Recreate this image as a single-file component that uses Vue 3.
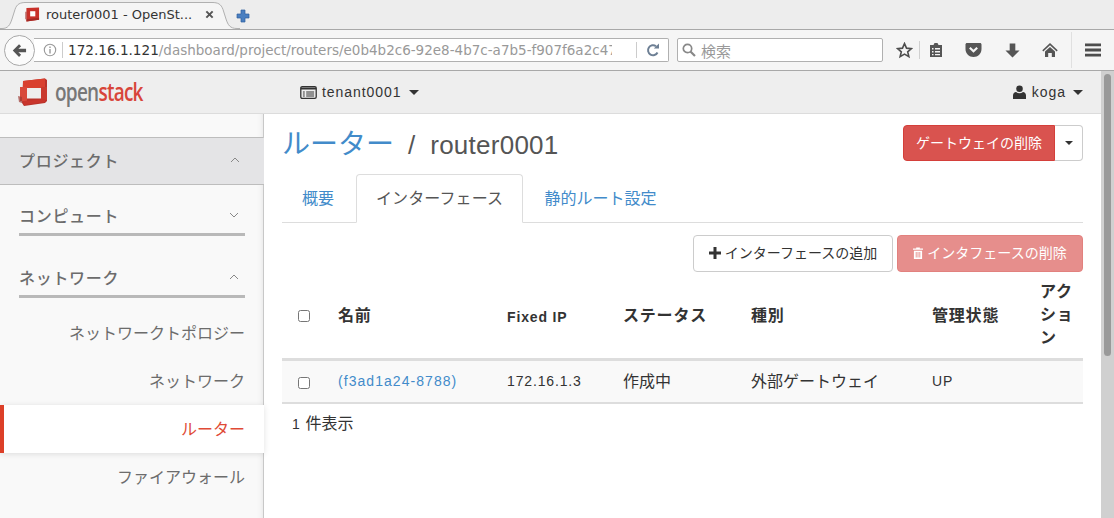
<template>
  <div class="page">
    <header class="tabbar">
      <svg class="tab-shape" viewBox="0 0 240 29"><path d="M0 28.500H2C8 28.500 10 25 12 19L15 9.500C16.800 4 20 2.500 26 2.500H212C218 2.500 221 4 223 9.500L226 19C228 25 230 28.500 237 28.500H240V29H0Z" fill="#f5f5f5"/><path d="M0 28.500H2C8 28.500 10 25 12 19L15 9.500C16.800 4 20 2.500 26 2.500H212C218 2.500 221 4 223 9.500L226 19C228 25 230 28.500 237 28.500H240" fill="none" stroke="#b0b0b0"/></svg>
      <div class="tab">
        <svg class="favicon" viewBox="0 0 16 16"><path d="M1.500 1L15 .5V13.500L1.500 15.500z" fill="#c8312a"/><path d="M0 5h2v8H0z" fill="#a8453f" opacity=".6"/><path d="M5.500 4.500h5.500v5.500H5.500z" fill="#fff"/><path d="M1.500 13l13.500-1.500v2L1.500 15.500z" fill="#a52a25"/></svg>
        <span class="tab-title">router0001 - OpenSt...</span>
        <svg class="tab-close" viewBox="0 0 10 10"><path d="M1.500 1.500l7 7M8.500 1.500l-7 7" stroke="#555" stroke-width="2.200"/></svg>
      </div>
      <svg class="newtab" viewBox="0 0 14 14"><path d="M5 1h4v4h4v4H9v4H5V9H1V5h4z" fill="#4a7fc0" stroke="#2f5f9f" stroke-width=".7"/></svg>
    </header>

    <div class="toolbar">
      <div class="back">
        <svg viewBox="0 0 16 16"><path d="M7.500 1.200L.8 8l6.700 6.800 2.200-2.200-2.900-2.800H15V6.200H6.800l2.900-2.800z" fill="#555"/></svg>
      </div>
      <div class="urlbar">
        <svg class="info" viewBox="0 0 14 14"><circle cx="7" cy="7" r="5.700" fill="none" stroke="#999" stroke-width="1.100"/><path d="M6.300 3.500h1.400v1.400H6.300zM6.300 6h1.400v4.500H6.300z" fill="#999"/></svg>
        <span class="sep"></span>
        <span class="url"><span class="url-host">172.16.1.121</span>/dashboard/project/routers/e0b4b2c6-92e8-4b7c-a7b5-f907f6a2c47</span>
        <span class="sep reload-sep"></span>
        <svg class="reload" viewBox="0 0 14 14"><path d="M11.500 9.500A5 5 0 1 1 10 3.200" fill="none" stroke="#6d7f94" stroke-width="2"/><path d="M7.800 5.500H13V.500z" fill="#6d7f94"/></svg>
      </div>
      <div class="search">
        <svg viewBox="0 0 14 14"><circle cx="5.500" cy="5.500" r="4.200" fill="none" stroke="#888" stroke-width="1.700"/><path d="M8.500 8.500l4.500 4.500" stroke="#888" stroke-width="2.200"/></svg>
        <span>検索</span>
      </div>
      <div class="tools">
        <svg class="t-star" viewBox="0 0 16 16"><path d="M8 1.500l1.900 4.300 4.600.4-3.500 3 1.100 4.600L8 11.400l-4.100 2.400L5 9.200l-3.500-3 4.600-.4z" fill="none" stroke="#4d4d4d" stroke-width="1.500"/></svg>
        <span class="tool-sep"></span>
        <svg class="t-clip" viewBox="0 0 16 16"><path d="M2 3h3.500l1-2h3l1 2H14v12H2z" fill="#555"/><path d="M4 6h1.500v1.500H4zM7 6h5v1.500H7zM4 9h1.500v1.500H4zM7 9h5v1.500H7zM4 12h1.500v1.200H4zM7 12h5v1.200H7z" fill="#f5f5f5"/></svg>
        <svg class="t-pocket" viewBox="0 0 16 14"><path d="M0 1.500C0 .7.600 0 1.500 0h13c.9 0 1.500.7 1.500 1.500V6c0 4.500-3.500 8-8 8s-8-3.500-8-8z" fill="#555"/><path d="M4.300 4.800L8 8.300l3.700-3.500" fill="none" stroke="#f5f5f5" stroke-width="2.200"/></svg>
        <svg class="t-down" viewBox="0 0 16 16"><path d="M5 .5h6V8h4.500L8 15.500.5 8H5z" fill="#555"/></svg>
        <svg class="t-home" viewBox="0 0 16 16"><path d="M8 1L.3 8.300l1 1.100L8 3.200l6.700 6.200 1-1.100z" fill="#555"/><path d="M3 9.500L8 4.900l5 4.600V15H9.800v-4H6.200v4H3z" fill="#555"/></svg>
        <span class="tool-sep tall"></span>
        <svg class="t-menu" viewBox="0 0 16 14"><path d="M0 .5h16v2.800H0zM0 5.600h16v2.800H0zM0 10.700h16v2.800H0z" fill="#4d4d4d"/></svg>
      </div>
    </div>

    <div class="viewport">
      <div class="app">
        <nav class="navbar">
          <div class="brand">
            <svg class="logo" viewBox="0 0 30 28">
              <path d="M5 3L27 .5 29 2v21l-2 2-21 3-2-3z" fill="#b9332b"/>
              <path d="M5 3L27 .5V10L5 10z" fill="#d9402f"/>
              <path d="M2 9h7v14H2z" fill="#d8493b"/>
              <path d="M0 18l4 1v6l-3-1z" fill="#9b3a34" opacity=".7"/>
              <path d="M23 9h6v13h-6z" fill="#c93a2e"/>
              <path d="M9 10h14v10.500H9z" fill="#eee"/>
              <path d="M5 23l22-2v3L6 27z" fill="#c9352c"/>
            </svg>
            <span class="wordmark"><span class="open">open</span><span class="stack">stack</span></span>
          </div>
          <div class="tenant">
            <svg viewBox="0 0 18 14"><rect x=".7" y=".7" width="16.600" height="12.600" rx="1.500" fill="none" stroke="#333" stroke-width="1.400"/><path d="M.7 1.500h16.600v2.300H.7zM3 5.800h2v1.200H3zM6.500 5.800H15v1.200H6.500zM3 8h2v1.200H3zM6.500 8H15v1.200H6.500zM3 10.200h2v1.200H3zM6.500 10.200H15v1.200H6.500z" fill="#333"/></svg>
            <span>tenant0001</span>
            <i class="caret"></i>
          </div>
          <div class="user">
            <svg viewBox="0 0 13 14"><circle cx="6.500" cy="3.800" r="3.300" fill="#333"/><path d="M0 14v-3.500C0 8.500 1.500 7 3 7c1 .8 2.200 1.200 3.500 1.200S9 7.800 10 7c1.500 0 3 1.500 3 3.500V14z" fill="#333"/></svg>
            <span>koga</span>
            <i class="caret"></i>
          </div>
        </nav>

        <div class="body">
          <aside class="sidebar">
            <div class="side-top"></div>
            <div class="side-project">
              <span>プロジェクト</span>
              <svg class="chev" viewBox="0 0 10 6"><path d="M1 5l4-4 4 4" fill="none" stroke="#888" stroke-width="1"/></svg>
            </div>
            <div class="side-group first">
              <span>コンピュート</span>
              <svg class="chev" viewBox="0 0 10 6"><path d="M1 1l4 4 4-4" fill="none" stroke="#888" stroke-width="1"/></svg>
            </div>
            <div class="side-group">
              <span>ネットワーク</span>
              <svg class="chev" viewBox="0 0 10 6"><path d="M1 5l4-4 4 4" fill="none" stroke="#888" stroke-width="1"/></svg>
            </div>
            <ul class="side-items">
              <li v-for="item in sideItems" :key="item" :class="{ active: item === 'ルーター' }">{{ item }}</li>
            </ul>
          </aside>

          <main class="content">
            <div class="title-row">
              <h1><a>ルーター</a><span class="slash">/</span><span class="rname">router0001</span></h1>
              <div class="split">
                <button class="danger">ゲートウェイの削除</button>
                <button class="split-caret"><i class="caret"></i></button>
              </div>
            </div>

            <div class="tabs">
              <a class="nav-tab">概要</a>
              <a class="nav-tab active">インターフェース</a>
              <a class="nav-tab">静的ルート設定</a>
            </div>

            <div class="actions">
              <button class="btn-default">
                <svg viewBox="0 0 12 12"><path d="M4.500 0h3v4.500H12v3H7.500V12h-3V7.500H0v-3h4.500z" fill="#333"/></svg>
                インターフェースの追加
              </button>
              <button class="btn-disabled">
                <svg viewBox="0 0 11 13"><path d="M3.500 1.500V.5h4v1H11v1.300H0V1.500zM1 4h9v9H1zM3 5.500v6h1v-6zM5 5.500v6h1v-6zM7 5.500v6h1v-6z" fill="#fff" fill-rule="evenodd"/></svg>
                インタフェースの削除
              </button>
            </div>

            <table>
              <colgroup>
                <col v-for="w in colWidths" :key="w" :style="{ width: w + 'px' }" />
              </colgroup>
              <thead>
                <tr>
                  <th class="check"><span class="cb"></span></th>
                  <th v-for="h in headers" :key="h" :class="{ ja: h !== 'Fixed IP' }">{{ h }}</th>
                </tr>
              </thead>
              <tbody>
                <tr>
                  <td class="check"><span class="cb"></span></td>
                  <td class="link"><a>(f3ad1a24-8788)</a></td>
                  <td>172.16.1.3</td>
                  <td class="ja">作成中</td>
                  <td class="ja">外部ゲートウェイ</td>
                  <td>UP</td>
                  <td></td>
                </tr>
              </tbody>
            </table>
            <p class="count">1 <span class="ja">件表示</span></p>
          </main>
        </div>
      </div>
      <div class="scrollbar"><div class="thumb"></div></div>
    </div>
  </div>
</template>

<script setup>
const sideItems = ['ネットワークトポロジー', 'ネットワーク', 'ルーター', 'ファイアウォール']
const headers = ['名前', 'Fixed IP', 'ステータス', '種別', '管理状態', 'アクション']
const colWidths = [46, 169, 116, 128, 181, 108, 53]
</script>

<style>
html, body { margin: 0; height: 100%; overflow: hidden; }
</style>

<style scoped>
.page {
  width: 1114px;
  height: 518px;
  display: flex;
  flex-direction: column;
  overflow: hidden;
  font-family: "Liberation Sans", "Noto Sans CJK JP", sans-serif;
  color: #333;
}
.tabbar {
  height: 29px;
  background: #ededed;
  border-bottom: 1px solid #a8a8a8;
  display: flex;
  align-items: flex-end;
  padding-left: 25px;
  flex: none;
  position: relative;
}
.tab-shape { position: absolute; left: 0; top: 0; width: 240px; height: 29px; }
.tab {
  width: 193px;
  height: 28px;
  position: relative;
  display: flex;
  align-items: center;
  padding-bottom: 1px;
  box-sizing: border-box;
}
.favicon { width: 15px; height: 15px; flex: none; }
.tab-title {
  margin-left: 6px;
  font-family: "DejaVu Sans", sans-serif;
  font-size: 13px;
  color: #333;
  white-space: nowrap;
  width: 159px;
}
.tab-close { width: 9px; height: 9px; flex: none; }
.newtab { width: 14px; height: 14px; margin: 0 0 6px 18px; position: relative; }

.toolbar {
  height: 40px;
  flex: none;
  background: #f5f5f5;
  border-bottom: 1px solid #a8a8a8;
  display: flex;
  align-items: center;
  position: relative;
}
.back {
  width: 31px;
  height: 31px;
  box-sizing: border-box;
  border: 1px solid #a8a8a8;
  border-radius: 50%;
  background: #fbfbfb;
  margin-left: 4px;
  display: flex;
  align-items: center;
  justify-content: center;
  z-index: 1;
  flex: none;
}
.back svg { width: 15px; height: 15px; }
.urlbar {
  width: 635px;
  height: 24px;
  box-sizing: border-box;
  margin-left: -1px;
  background: #fff;
  border: 1px solid #b0b0b0;
  border-left: none;
  border-radius: 0 2px 2px 0;
  display: flex;
  align-items: center;
  padding-left: 9px;
  flex: none;
}
.info { width: 14px; height: 14px; flex: none; }
.sep { width: 1px; height: 16px; background: #ccc; margin: 0 5px; flex: none; }
.url {
  font-family: "DejaVu Sans", sans-serif;
  font-size: 13.500px;
  color: #999;
  white-space: nowrap;
  overflow: hidden;
  width: 544px;
  flex: none;
}
.url-host { color: #333; font-size: 13.600px; }
.reload-sep { margin: 0 0 0 24px; }
.reload { width: 14px; height: 14px; margin-left: 9px; flex: none; }
.search {
  width: 206px;
  height: 24px;
  box-sizing: border-box;
  margin-left: 8px;
  background: #fff;
  border: 1px solid #b0b0b0;
  border-radius: 2px;
  display: flex;
  align-items: center;
  padding-left: 4px;
  flex: none;
  color: #999;
  font-size: 15px;
}
.search svg { width: 14px; height: 14px; margin-right: 5px; }
.tools { position: relative; flex: 1; height: 100%; display: flex; align-items: center; }
.tools svg { flex: none; }
.t-star { width: 17px; height: 17px; margin-left: 13px; }
.tool-sep { width: 1px; height: 18px; background: #d0d0d0; margin-left: 6px; flex: none; }
.tool-sep.tall { height: 36px; margin-left: 13px; background: #e0e0e0; }
.t-clip { width: 16px; height: 16px; margin-left: 8px; }
.t-pocket { width: 17px; height: 14px; margin-left: 21px; }
.t-down { width: 15px; height: 15px; margin-left: 23px; }
.t-home { width: 16px; height: 16px; margin-left: 22px; }
.t-menu { width: 16px; height: 14px; margin-left: 13px; }

.viewport { flex: 1; display: flex; min-height: 0; }
.app { flex: 1; min-width: 0; display: flex; flex-direction: column; }
.navbar {
  height: 43px;
  flex: none;
  background: #eee;
  box-sizing: border-box;
  border-bottom: 1px solid #dcdcdc;
  display: flex;
  align-items: center;
  font-size: 14px;
  letter-spacing: .95px;
  padding-left: 18px;
}
.brand { width: 282px; display: flex; align-items: center; flex: none; }
.logo { width: 30px; height: 28px; flex: none; }
.wordmark {
  margin-left: 7px;
  margin-top: -3px;
  font-family: "Open Sans", sans-serif;
  font-weight: 600;
  font-size: 25px;
  letter-spacing: -1px;
  display: inline-block;
  transform: scaleX(.76);
  transform-origin: left center;
  white-space: nowrap;
}
.open { color: #777; }
.stack { color: #d8453a; }
.tenant { display: flex; align-items: center; flex: 1; }
.tenant svg { width: 17px; height: 13px; margin-right: 5px; }
.user { display: flex; align-items: center; margin-right: 18px; }
.user svg { width: 13px; height: 14px; margin-right: 6px; }
.caret {
  display: inline-block;
  border-top: 5px solid #333;
  border-left: 5px solid transparent;
  border-right: 5px solid transparent;
  margin-left: 7px;
}
.body { flex: 1; display: flex; min-height: 0; background: #fff; }
.sidebar {
  width: 264px;
  flex: none;
  box-sizing: border-box;
  background: #f9f9f9;
  box-shadow: inset -6px 0 6px -6px rgba(0,0,0,.1);
  border-right: 1px solid #c8c8c8;
  font-size: 16px;
  color: #6c6c6c;
  position: relative;
}
.side-top { height: 23px; border-bottom: 1px solid #bdbdbd; }
.side-project {
  height: 47px;
  box-sizing: border-box;
  border-bottom: 1px solid #bdbdbd;
  background: #e4e4e6;
  margin-right: -1px;
  display: flex;
  align-items: center;
  justify-content: space-between;
  padding: 0 24px 2px 19px;
  font-weight: 500;
  letter-spacing: .7px;
}
.side-group {
  margin: 26px 18px 0 19px;
  height: 29px;
  padding-bottom: 4px;
  border-bottom: 3px solid #b9b9b9;
  display: flex;
  align-items: center;
  justify-content: space-between;
  padding-right: 6px;
  font-weight: 500;
  letter-spacing: .7px;
}
.side-group.first { margin-top: 15px; }
.chev { width: 10px; height: 6px; }
.side-items {
  list-style: none;
  margin: 11px 0 0;
  padding: 0;
}
.side-items li {
  height: 48px;
  line-height: 50px;
  box-sizing: border-box;
  text-align: right;
  padding-right: 18px;
}
.side-items li.active {
  position: relative;
  margin-right: -1px;
  padding-right: 19px;
  background: #fff;
  color: #e04a36;
  border-left: 4px solid #dc3f28;
  box-shadow: 0 1px 6px rgba(0,0,0,.12);
}

.content { flex: 1; min-width: 0; padding: 0 18px; font-size: 14px; letter-spacing: .85px; }
.title-row {
  height: 60px;
  display: flex;
  justify-content: space-between;
  align-items: flex-start;
}
h1 {
  margin: 13px 0 0;
  font-size: 26px;
  font-weight: 400;
  line-height: 36px;
  letter-spacing: 0;
  white-space: nowrap;
  color: #555;
}
h1 a { font-size: 28px; color: #428bca; }
.slash { margin: 0 15px 0 14px; }
.rname { letter-spacing: .25px; }
button {
  font: inherit;
  box-sizing: border-box;
  cursor: pointer;
}
.split { display: flex; margin-top: 11px; }
.danger {
  width: 152px;
  height: 36px;
  background: #d9534f;
  border: 1px solid #d43f3a;
  color: #fff;
  border-radius: 4px 0 0 4px;
  padding: 0 0 3px;
  letter-spacing: 0;
}
.split-caret {
  width: 28px;
  height: 36px;
  background: #fff;
  border: 1px solid #ccc;
  border-left: none;
  border-radius: 0 4px 4px 0;
  padding: 0;
}
.split-caret .caret { border-top-width: 4px; border-left-width: 4px; border-right-width: 4px; display: block; margin: 0 auto; width: 0; }
.tabs {
  display: flex;
  height: 49px;
  box-sizing: border-box;
  border-bottom: 1px solid #ddd;
}
.nav-tab {
  padding: 0 20px;
  height: 48px;
  line-height: 50px;
  color: #428bca;
  letter-spacing: 0;
  font-size: 16px;
}
.nav-tab.active {
  height: 49px;
  box-sizing: border-box;
  background: #fff;
  border: 1px solid #ddd;
  border-bottom-color: #fff;
  border-radius: 4px 4px 0 0;
  color: #555;
  margin: 0 1.500px 0 2px;
  line-height: 48px;
  padding: 0 19px;
  letter-spacing: .1px;
}
.actions {
  display: flex;
  justify-content: flex-end;
  gap: 4px;
  margin-top: 12px;
}
.actions button {
  height: 37px;
  border-radius: 4px;
  padding: 0 0 3px;
  display: flex;
  align-items: center;
  justify-content: center;
  letter-spacing: 0;
  white-space: nowrap;
}
.actions svg { margin-right: 4px; margin-top: 2px; }
.btn-default {
  width: 200px;
  background: #fff;
  border: 1px solid #ccc;
  color: #333;
}
.btn-default svg { width: 12px; height: 12px; }
.btn-disabled {
  width: 186px;
  background: #d9534f;
  border: 1px solid #d43f3a;
  color: #fff;
  opacity: .65;
}
.btn-disabled svg { width: 10px; height: 12px; }
table {
  width: 801px;
  table-layout: fixed;
  border-collapse: separate;
  border-spacing: 0;
}
th {
  text-align: left;
  vertical-align: middle;
  padding: 3px 10px 0;
  height: 89px;
  box-sizing: border-box;
  font-weight: 700;
  border-bottom: 3px solid #ddd;
}
th:last-child { padding-right: 6px; padding-top: 1px; }
td {
  padding: 0 10px 2px;
  height: 43px;
  box-sizing: border-box;
  background: #f9f9f9;
  border-bottom: 2px solid #ddd;
}
th.ja { font-size: 16px; line-height: 22.800px; letter-spacing: .8px; }
.ja { font-size: 16px; letter-spacing: 0; }
td.ja { padding-bottom: 4px; }
td.link { letter-spacing: 1.050px; }
td a { color: #428bca; }
.check { padding: 0 0 0 16px; }
th.check { padding-top: 2px; }
.cb {
  display: block;
  width: 12px;
  height: 12px;
  box-sizing: border-box;
  background: #fff;
  border: 1px solid #767676;
  border-radius: 2.500px;
}
td.check .cb { margin-top: 2px; }
.count { margin: 10px 0 0 10px; line-height: 20px; }
.scrollbar {
  width: 13px;
  flex: none;
  box-sizing: border-box;
  background: #d0d0d0;
  padding: 3px 3px 0;
}
.thumb { height: 282px; background: #999; border-radius: 4px; }
</style>
